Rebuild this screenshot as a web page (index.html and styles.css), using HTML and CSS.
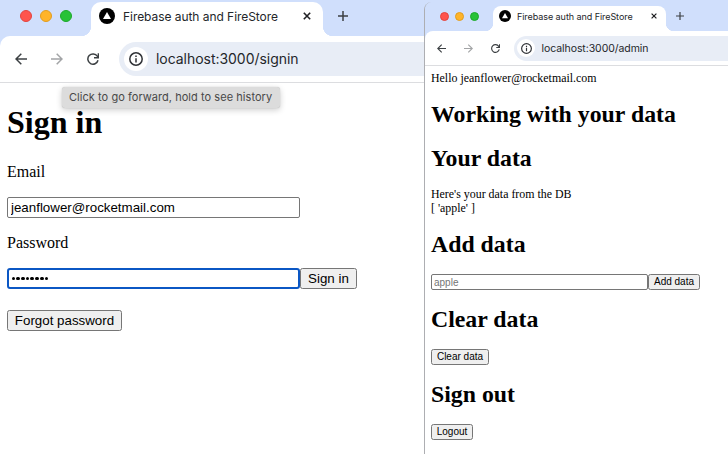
FILE: index.html
```html
<!DOCTYPE html>
<html lang="en">
<head>
<meta charset="utf-8">
<title>Firebase auth and FireStore</title>
<link rel="stylesheet" href="styles.css">
</head>
<body>
<svg class="defs" width="0" height="0">
  <symbol id="logo" viewBox="0 0 16 16"><circle cx="8" cy="8" r="8" fill="#000"/><path d="M8 3.9 12 11H4Z" fill="#fff"/></symbol>
  <symbol id="close" viewBox="0 0 8 8"><path d="M.8.8l6.4 6.4M7.2.8L.8 7.2" stroke="#202124" stroke-width="1.6"/></symbol>
  <symbol id="plus" viewBox="0 0 10 10"><path d="M5 0v10M0 5h10" stroke="#3c4043" stroke-width="1.5"/></symbol>
  <symbol id="back" viewBox="0 0 12 12"><path d="M12 6H1.2M6.3.7L1 6l5.3 5.3" fill="none" stroke="currentColor" stroke-width="1.5"/></symbol>
  <symbol id="reload" viewBox="0 0 12 12"><path d="M11 7.3A5.15 5.15 0 1 1 10.3 3.2L11.1 4.4" fill="none" stroke="#3c4043" stroke-width="1.5"/><path d="M11.4.3V4.7H7" fill="none" stroke="#3c4043" stroke-width="1.5"/></symbol>
  <symbol id="info" viewBox="0 0 14 14"><circle cx="7" cy="7" r="6.2" fill="none" stroke="#303236" stroke-width="1.5"/><path d="M7 6.2v4.2M7 3.5v1.6" stroke="#303236" stroke-width="1.5"/></symbol>
</svg>
<main class="desktop">
  <section class="window signin">
    <header class="strip">
      <div class="lights"><i class="red"></i><i class="amber"></i><i class="green"></i></div>
      <div class="tab"><svg class="logo"><use href="#logo"/></svg><span class="title">Firebase auth and FireStore</span><svg class="close"><use href="#close"/></svg></div>
      <svg class="plus"><use href="#plus"/></svg>
    </header>
    <nav class="toolbar">
      <svg class="nav"><use href="#back"/></svg><svg class="nav forward"><use href="#back"/></svg><svg class="nav"><use href="#reload"/></svg>
      <div class="address"><span class="badge"><svg class="info"><use href="#info"/></svg></span><span class="url">localhost:3000/signin</span></div>
      <div class="tooltip">Click to go forward, hold to see history</div>
    </nav>
    <div class="page">
      <h1>Sign in</h1>
      <p>Email</p>
      <div class="row"><input type="text" value="jeanflower@rocketmail.com"></div>
      <p>Password</p>
      <div class="row"><div class="field focused"><b></b><b></b><b></b><b></b><b></b><b></b><b></b><b></b></div><button class="go">Sign in</button></div>
      <button class="forgot">Forgot password</button>
    </div>
  </section>
  <section class="window admin">
    <header class="strip">
      <div class="lights"><i class="red"></i><i class="amber"></i><i class="green"></i></div>
      <div class="tab"><svg class="logo"><use href="#logo"/></svg><span class="title">Firebase auth and FireStore</span><svg class="close"><use href="#close"/></svg></div>
      <svg class="plus"><use href="#plus"/></svg>
    </header>
    <nav class="toolbar">
      <svg class="nav"><use href="#back"/></svg><svg class="nav forward"><use href="#back"/></svg><svg class="nav"><use href="#reload"/></svg>
      <div class="address"><span class="badge"><svg class="info"><use href="#info"/></svg></span><span class="url">localhost:3000/admin</span></div>
    </nav>
    <div class="page">
      <div class="hello">Hello jeanflower@rocketmail.com</div>
      <h1>Working with your data</h1>
      <h1>Your data</h1>
      <div class="data">Here's your data from the DB<br>[ 'apple' ]</div>
      <h1>Add data</h1>
      <div class="row"><input type="text" placeholder="apple"><button class="add">Add data</button></div>
      <h1>Clear data</h1>
      <button class="clear">Clear data</button>
      <h1>Sign out</h1>
      <button class="logout">Logout</button>
    </div>
  </section>
</main>
</body>
</html>
```
FILE: styles.css
```css
* { box-sizing: border-box; }
body { margin: 0; background: #fff; color: #000; font-family: "Liberation Serif", serif; overflow: hidden; }
svg { display: block; flex: none; }
.defs { position: absolute; }
.desktop { display: grid; grid-template-columns: 424px 304px; width: 728px; height: 471px; background: linear-gradient(#d0dffc 0 36px, #fff 36px); }
.window { display: flex; flex-direction: column; background: #d0dffc; min-width: 0; }

/* Browser chrome */
.strip { display: flex; align-items: center; flex: none; background: #d0dffc; }
.lights { display: flex; flex: none; }
.lights i { border-radius: 50%; border: 1px solid; }
.lights .red { background: #ff544d; border-color: #e2453f; }
.lights .amber { background: #ffb429; border-color: #e19d20; }
.lights .green { background: #28c238; border-color: #1da92b; }
.tab { position: relative; display: flex; align-items: center; flex: none; background: #fff; align-self: flex-end; }
.tab::before, .tab::after { content: ""; position: absolute; bottom: 0; width: var(--flare); height: var(--flare); }
.tab::before { right: 100%; background: radial-gradient(circle at 0 0, transparent var(--flare), #fff calc(var(--flare) + .5px)); }
.tab::after { left: 100%; background: radial-gradient(circle at 100% 0, transparent var(--flare), #fff calc(var(--flare) + .5px)); }
.title, .url { font-family: Inter, sans-serif; white-space: nowrap; color: #24262a; }
.close { margin-left: auto; }
.toolbar { position: relative; display: flex; align-items: center; flex: none; background: #fff; border-bottom: 1px solid #dcdde0; border-top-left-radius: var(--flare); }
.nav { color: #3c4043; }
.forward { color: #a2a4a6; transform: scaleX(-1); }
.address { display: flex; align-items: center; flex: 1; background: #e8edf6; }
.badge { display: grid; place-items: center; border-radius: 50%; background: #fff; }
.tooltip { position: absolute; left: 62px; top: 51px; width: 218px; height: 21px; padding-left: 7px; border-radius: 3px; background: #dcdcdc; box-shadow: 0 2px 6px #0003, 0 0 1px #0004; color: #484848; font: 11px/20px Inter, sans-serif; letter-spacing: .05px; white-space: nowrap; }

/* Page elements */
.page { flex: 1; background: #fff; }
h1, p { margin: 0; font-weight: 700; white-space: nowrap; }
p { font-weight: 400; }
.row { display: flex; }
input, .field { display: block; border: 1px solid #767676; border-radius: 2px; background: #fff; margin: 0; font-family: "Liberation Sans", sans-serif; outline: 0; color: #000; }
input::placeholder { color: #757575; }
button { display: block; margin: 0; padding: 0; border: 1px solid #767676; border-radius: 2.5px; background: #efefef; color: #000; font-family: "Liberation Sans", sans-serif; white-space: nowrap; }

/* Sign-in window */
.signin { --flare: 10px; }
.signin .strip { height: 36px; padding-left: 20px; }
.signin .lights { gap: 8px; width: 71px; margin-top: -4px; }
.signin .lights i { width: 12px; height: 12px; }
.signin .tab { width: 232px; height: 34px; padding: 0 12px 6px 8px; border-radius: 10px 10px 0 0; }
.signin .logo { width: 16px; height: 16px; }
.signin .title { margin-left: 8px; font-size: 12px; letter-spacing: -.05px; }
.signin .close { width: 8px; height: 8px; }
.signin .plus { width: 10px; height: 10px; margin: -4px 0 0 15px; }
.signin .toolbar { height: 47px; padding-left: 15px; gap: 24px; }
.signin .nav { width: 12px; height: 12px; }
.signin .address { height: 34px; margin-left: -4px; padding-left: 5px; border-radius: 17px 0 0 17px; }
.signin .badge { width: 24px; height: 24px; }
.signin .info { width: 14px; height: 14px; }
.signin .url { margin: -2px 0 0 8px; font-size: 14px; letter-spacing: -.04px; }
.signin .page { padding: 21px 0 0 7px; }
.signin h1 { font-size: 32px; line-height: 37px; height: 37px; margin-bottom: 22px; }
.signin p { font-size: 16px; line-height: 18px; height: 18px; margin-bottom: 16px; }
.signin .row { height: 21px; margin-bottom: 16px; }
.signin input { width: 293px; height: 21px; padding: 0 3px; font-size: 13.33px; }
.signin .field { display: flex; align-items: center; width: 293px; height: 21px; padding-left: 2.5px; gap: 1.15px; }
.signin .focused { border: 2px solid #0b57c4; border-radius: 3px; }
.field b { width: 3.6px; height: 3.6px; border-radius: 50%; background: #000; }
.signin button { height: 21px; font-size: 13.33px; }
.go { width: 57px; }
.forgot { width: 115px; margin-top: 21px; }

/* Admin window */
.admin { --flare: 8px; height: 452px; margin-top: 2px; border-left: 1px solid #adaeb2; border-top-left-radius: 8px; overflow: hidden; }
.admin .strip { height: 29px; padding-left: 15px; }
.admin .lights { gap: 6px; width: 53px; margin-top: -1px; }
.admin .lights i { width: 9px; height: 9px; }
.admin .tab { width: 173px; height: 25px; padding: 0 9px 5px 6px; border-radius: 8px 8px 0 0; }
.admin .logo { width: 12px; height: 12px; }
.admin .title { margin-left: 6px; font-size: 9px; letter-spacing: -.06px; }
.admin .close { width: 6px; height: 6px; }
.admin .plus { width: 8px; height: 8px; margin: -1px 0 0 10px; }
.admin .toolbar { height: 35px; padding-left: 12px; gap: 18px; }
.admin .nav { width: 9px; height: 9px; }
.admin .address { height: 25px; margin-left: -4px; padding-left: 3px; border-radius: 13px 0 0 13px; }
.admin .badge { width: 18px; height: 18px; }
.admin .info { width: 11px; height: 11px; }
.admin .url { margin-left: 6.5px; font-size: 10.5px; letter-spacing: -.07px; }
.admin .page { padding: 5px 0 0 6px; }
.hello { font-size: 11.9px; line-height: 14px; height: 14px; }
.admin h1 { font-size: 23.8px; line-height: 27px; height: 27px; margin: 16px 0; }
.admin h1 + h1 { margin-top: 17px; }
.data { font-size: 11.9px; line-height: 13.5px; height: 27px; }
.admin .row { height: 16px; }
.admin input { width: 217px; height: 16px; padding: 0 2px; font-size: 10px; }
.admin button { height: 16px; font-size: 10px; line-height: 14px; }
.add { width: 52px; }
.clear { width: 58px; }
.logout { width: 42px; }
```
